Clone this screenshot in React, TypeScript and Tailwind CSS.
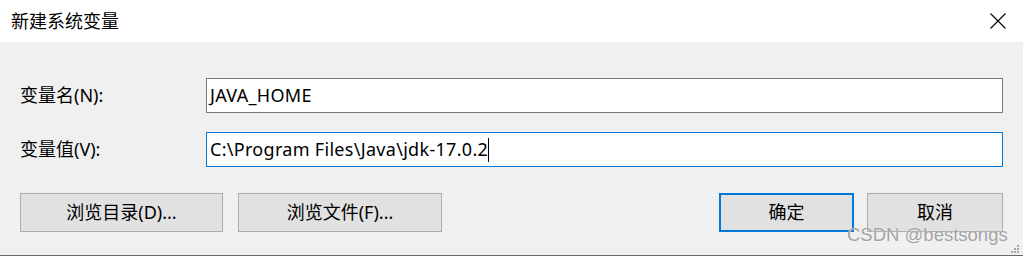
import React from 'react';

const font = { fontFamily: '"Noto Sans", "Noto Sans CJK SC", sans-serif' };

const Button: React.FC<{ label: string; primary?: boolean; className?: string }> = ({ label, primary, className }) => (
  <div
    className={`h-[39px] flex items-center justify-center bg-[#e1e1e1] text-[18px] text-black ${
      primary ? 'border-2 border-[#0078d7]' : 'border border-[#adadad]'
    } ${className ?? ''}`}
  >
    {label}
  </div>
);

export default function App() {
  return (
    <div className="relative w-[1023px] h-[256px] flex flex-col overflow-hidden" style={font}>
      <div className="h-[42px] bg-white flex items-center justify-between pl-[11px] pr-[17px] shrink-0">
        <span className="text-[18px] text-black leading-none">新建系统变量</span>
        <svg width="16" height="16" viewBox="0 0 16 16">
          <path d="M0.5 0.5 L15.5 15.5 M15.5 0.5 L0.5 15.5" stroke="#000" strokeWidth="1.1" fill="none" />
        </svg>
      </div>

      <div className="flex-1 bg-[#f0f0f0] border-b border-[#6b6b6b] pt-[36px] px-[20px]">
        <div className="flex items-center">
          <span className="w-[186px] text-[18px] text-black">变量名(N):</span>
          <div className="flex-1 h-[35px] bg-white border border-[#7a7a7a] flex items-center pl-[3px] text-[18px] tracking-[0.3px] text-black">
            JAVA_HOME
          </div>
        </div>
        <div className="flex items-center mt-[19px]">
          <span className="w-[186px] text-[18px] text-black">变量值(V):</span>
          <div className="flex-1 h-[35px] bg-white border border-[#0078d7] flex items-center pl-[3px] text-[18px] tracking-[0.3px] text-black">
            C:\Program Files\Java\jdk-17.0.2
            <span className="inline-block w-px h-[24px] bg-black" />
          </div>
        </div>
        <div className="flex mt-[26px]">
          <Button label="浏览目录(D)..." className="w-[203px]" />
          <Button label="浏览文件(F)..." className="w-[204px] ml-[15px]" />
          <Button label="确定" primary className="w-[135px] ml-[277px]" />
          <Button label="取消" className="w-[136px] ml-[13px]" />
        </div>
      </div>

      <span
        className="absolute left-[847px] top-[226px] text-[18.5px] text-[#a3a3a3] leading-none"
        style={{ fontFamily: '"Liberation Sans", sans-serif', textShadow: '0 0 1px #fff' }}
      >
        CSDN @bestsongs
      </span>
      <svg className="absolute left-[1010px] top-[244px]" width="10" height="10" viewBox="0 0 10 10">
        <g fill="#a8a8a8">
          <rect x="7" y="1" width="2" height="2" />
          <rect x="4" y="4" width="2" height="2" />
          <rect x="7" y="4" width="2" height="2" />
          <rect x="1" y="7" width="2" height="2" />
          <rect x="4" y="7" width="2" height="2" />
          <rect x="7" y="7" width="2" height="2" />
        </g>
      </svg>
    </div>
  );
}
